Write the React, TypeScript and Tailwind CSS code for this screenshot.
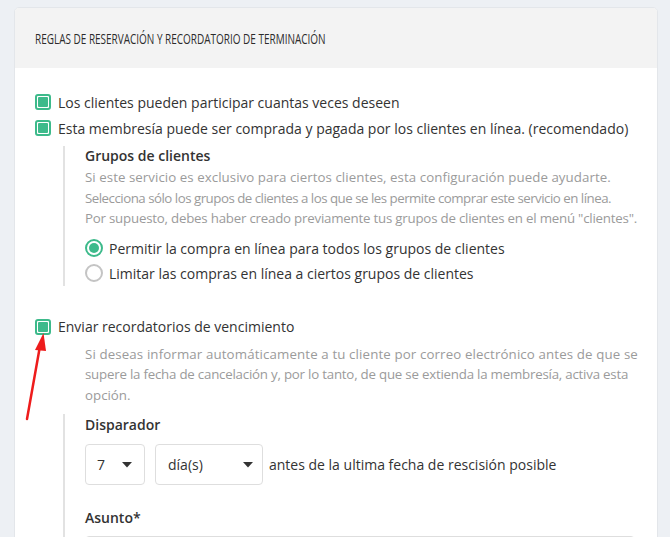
import React from "react";

function Check() {
  return (
    <span className="flex h-[16px] w-[16px] shrink-0 items-center justify-center rounded-[3px] border-2 border-[#3dba8b] bg-white">
      <span className="h-[10px] w-[10px] rounded-[1px] bg-[#3dba8b]" />
    </span>
  );
}

function Radio({ on }: { on?: boolean }) {
  return (
    <span
      className={
        "flex h-[18px] w-[18px] shrink-0 items-center justify-center rounded-full border-2 bg-white " +
        (on ? "border-[#3dba8b]" : "border-[#c4c4c4]")
      }
    >
      {on && <span className="h-[10px] w-[10px] rounded-full bg-[#3dba8b]" />}
    </span>
  );
}

function Caret() {
  return (
    <svg width="10" height="6" viewBox="0 0 10 6">
      <path d="M0 0 L10 0 L5 5.5 Z" fill="#333" />
    </svg>
  );
}

export default function App() {
  return (
    <div
      className="relative h-[537px] overflow-hidden bg-[#edf0f4] pl-[14px] pr-[12px] pt-[7px] text-[#333]"
      style={{ fontFamily: '"Open Sans", sans-serif' }}
    >
      <div className="h-[560px] overflow-hidden rounded-[5px] border border-[#e3e6ea] bg-white">
        <div className="flex h-[60px] items-center bg-[#f3f3f3] pl-[20px] text-[#2b2b2b]">
          <span className="origin-left scale-x-[0.665] whitespace-nowrap text-[15px]">
            REGLAS DE RESERVACIÓN Y RECORDATORIO DE TERMINACIÓN
          </span>
        </div>
        <div className="pl-[20px] pr-[12px] pt-[21px]">
          <div className="flex h-[26px] items-center gap-[7px] text-[14px]">
            <Check />
            <span>Los clientes pueden participar cuantas veces deseen</span>
          </div>
          <div className="flex h-[26px] items-center gap-[7px] text-[14px]">
            <Check />
            <span className="whitespace-nowrap">Esta membresía puede ser comprada y pagada por los clientes en línea. (recomendado)</span>
          </div>
          <div className="ml-[28px] mt-[5px] border-l-2 border-[#e2e2e2] pl-[20px]">
            <div className="text-[14px] font-semibold leading-[20px] text-[#333]">Grupos de clientes</div>
            <div className="mt-[1px] flex flex-col whitespace-nowrap text-[13.3px] leading-[20.5px] text-[#9b9b9b]">
              <span className="tracking-[0.05px]">Si este servicio es exclusivo para ciertos clientes, esta configuración puede ayudarte.</span>
              <span className="tracking-[-0.5px]">Selecciona sólo los grupos de clientes a los que se les permite comprar este servicio en línea.</span>
              <span className="tracking-[-0.22px]">Por supuesto, debes haber creado previamente tus grupos de clientes en el menú "clientes".</span>
            </div>
            <div className="mt-[7px] flex h-[25px] items-center gap-[6px] text-[14px]">
              <Radio on />
              <span>Permitir la compra en línea para todos los grupos de clientes</span>
            </div>
            <div className="flex h-[25px] items-center gap-[6px] text-[14px]">
              <Radio />
              <span>Limitar las compras en línea a ciertos grupos de clientes</span>
            </div>
          </div>
          <div className="mt-[28px] flex h-[26px] items-center gap-[7px] text-[14px]">
            <Check />
            <span>Enviar recordatorios de vencimiento</span>
          </div>
          <div className="ml-[50px] mt-[4px] flex flex-col whitespace-nowrap text-[13.3px] leading-[20.5px] text-[#9b9b9b]">
            <span className="tracking-[0.12px]">Si deseas informar automáticamente a tu cliente por correo electrónico antes de que se</span>
            <span className="tracking-[-0.22px]">supere la fecha de cancelación y, por lo tanto, de que se extienda la membresía, activa esta</span>
            <span>opción.</span>
          </div>
          <div className="ml-[28px] mt-[9px] border-l-2 border-[#e2e2e2] pl-[20px] pt-[1px]">
            <div className="text-[14px] font-semibold leading-[20px]">Disparador</div>
            <div className="mt-[9px] flex items-center gap-[10px] text-[14px]">
              <div className="flex h-[41px] w-[60px] items-center justify-between rounded-[4px] border border-[#dedede] pl-[11px] pr-[12px]">
                <span>7</span>
                <Caret />
              </div>
              <div className="flex h-[41px] w-[108px] items-center justify-between rounded-[4px] border border-[#dedede] pl-[12px] pr-[9px]">
                <span>día(s)</span>
                <Caret />
              </div>
              <span className="-ml-[4px]">antes de la ultima fecha de rescisión posible</span>
            </div>
            <div className="mt-[23px] text-[14px] font-semibold leading-[20px]">Asunto*</div>
            <div className="mr-[10px] mt-[8px] h-[40px] rounded-[4px] border border-[#dedede]" />
          </div>
        </div>
      </div>
      <svg className="absolute left-0 top-0" width="670" height="537" viewBox="0 0 670 537">
        <line x1="27" y1="419" x2="40" y2="346" stroke="#ee1c1c" strokeWidth="2.5" strokeLinecap="round" />
        <path d="M43.5 333 L35 350 L46 351 Z" fill="#ee1c1c" />
      </svg>
    </div>
  );
}
